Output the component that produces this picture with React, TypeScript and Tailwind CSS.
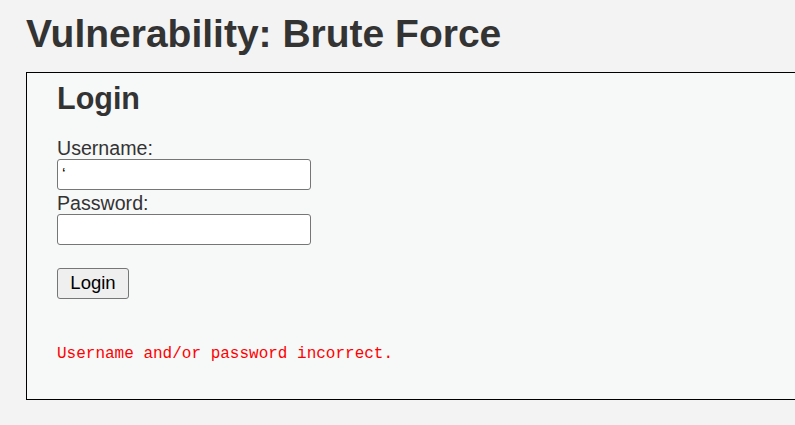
export default function App() {
  return (
    <div className="min-h-[425px] w-[795px] overflow-hidden bg-[#f3f3f3] text-[#333333] [font-family:'Liberation_Sans',Arial,sans-serif]">
      <div className="pl-[26px] pt-[12px]">
        <h1 className="text-[39px] font-bold leading-[44px] whitespace-nowrap">Vulnerability: Brute Force</h1>
        <div className="mt-[16px] w-[900px] h-[328px] border border-black bg-[#f7f8f8] pl-[30px]">
          <h2 className="pt-[8px] text-[30.5px] font-bold leading-[35px]">Login</h2>
          <form className="mt-[21px]" onSubmit={(e) => e.preventDefault()}>
            <div className="text-[19.6px] leading-[22px]">Username:</div>
            <input
              type="text"
              defaultValue="‘"
              className="block w-[254px] h-[31px] border border-[#767676] rounded-[3px] bg-white px-[4px] text-[16px] text-black outline-none"
            />
            <div className="mt-[2px] text-[19.6px] leading-[22px]">Password:</div>
            <input
              type="password"
              className="block w-[254px] h-[31px] border border-[#767676] rounded-[3px] bg-white px-[4px] text-[16px] outline-none"
            />
            <button
              type="submit"
              className="mt-[23px] block w-[72px] h-[31px] border border-[#767676] rounded-[3px] bg-[#efefef] text-[18.5px] text-black leading-none"
            >
              Login
            </button>
          </form>
          <pre className="mt-[45px] text-[16px] leading-[20px] text-[#ff0000] [font-family:'Liberation_Mono','Courier_New',monospace]">Username and/or password incorrect.</pre>
        </div>
      </div>
    </div>
  );
}
